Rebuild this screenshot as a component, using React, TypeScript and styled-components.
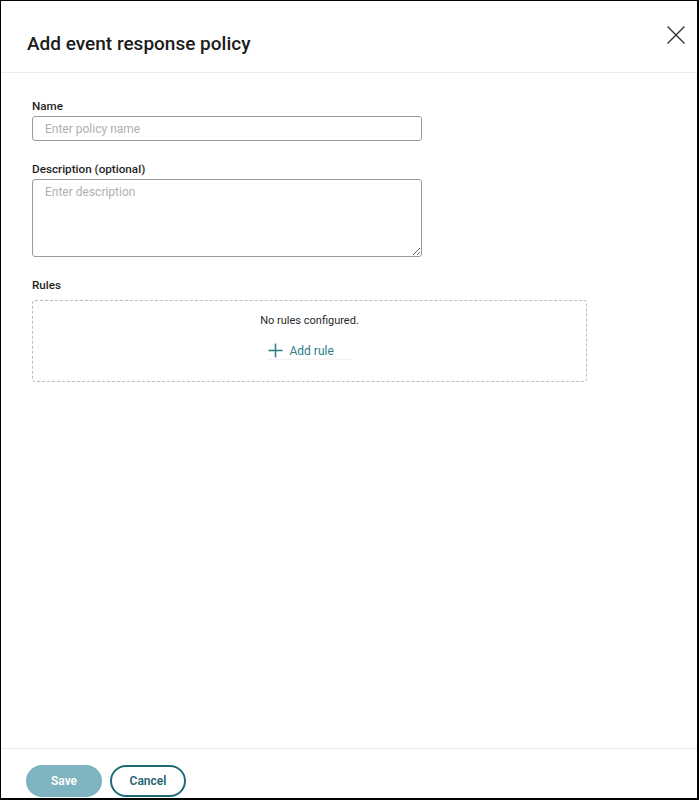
import React from "react";
import styled, { createGlobalStyle } from "styled-components";

const Global = createGlobalStyle`
  html, body { margin: 0; padding: 0; background: #fff; }
  body { font-family: Roboto, "Noto Sans", "Liberation Sans", sans-serif; }
  * { box-sizing: border-box; }
`;

const Frame = styled.div`
  width: 699px;
  height: 800px;
  border-style: solid;
  border-color: #000;
  border-width: 1px 2px 2px 1px;
  display: flex;
  flex-direction: column;
  overflow: hidden;
  background: #fff;
`;

const Header = styled.div`
  height: 72px;
  flex: 0 0 72px;
  border-bottom: 1px solid #ececec;
  display: flex;
  align-items: center;
  justify-content: space-between;
  padding: 0 10px 0 26px;
`;

const Title = styled.h1`
  margin: 13px 0 0 0;
  font-size: 19px;
  font-weight: 500;
  color: #1b1b1b;
`;

const CloseButton = styled.button`
  border: none;
  background: transparent;
  padding: 0;
  width: 22px;
  height: 22px;
  display: flex;
  align-items: center;
  justify-content: center;
  cursor: pointer;
  margin-bottom: 3px;
`;

const Body = styled.div`
  flex: 1;
  padding: 25px 0 0 31px;
  display: flex;
  flex-direction: column;
`;

const Field = styled.div<{ $gap?: number }>`
  display: flex;
  flex-direction: column;
  gap: ${(p) => p.$gap ?? 2}px;
  margin-bottom: 20px;
`;

const Label = styled.label`
  font-size: 11.7px;
  line-height: 16px;
  font-weight: 500;
  color: #1f1f1f;
`;

const Input = styled.input`
  width: 390px;
  height: 25px;
  border: 1px solid #9a9a9a;
  border-radius: 3px;
  padding: 0 12px;
  font-family: inherit;
  font-size: 12px;
  color: #222;
  outline: none;
  &::placeholder { color: #b0b0b0; }
`;

const TextArea = styled.textarea`
  width: 390px;
  height: 78px;
  border: 1px solid #9a9a9a;
  border-radius: 3px;
  padding: 5px 12px;
  font-family: inherit;
  font-size: 12px;
  color: #222;
  outline: none;
  resize: vertical;
  display: block;
  &::placeholder { color: #b0b0b0; }
`;

const RulesBox = styled.div`
  width: 555px;
  height: 82px;
  border: 1px dashed #bdbdbd;
  border-radius: 3px;
  display: flex;
  flex-direction: column;
  align-items: center;
  padding-top: 12px;
  gap: 14px;
`;

const EmptyText = styled.div`
  font-size: 11px;
  line-height: 16px;
  color: #2a2a2a;
`;

const AddRuleButton = styled.button`
  border: none;
  border-bottom: 1px solid #f2f2f2;
  background: transparent;
  display: flex;
  align-items: center;
  gap: 7px;
  width: 84px;
  padding: 0 0 1px 0;
  font-family: inherit;
  font-size: 12px;
  color: #2c7d89;
  cursor: pointer;
`;

const Footer = styled.div`
  flex: 0 0 auto;
  height: 50px;
  border-top: 1px solid #ececec;
  display: flex;
  align-items: flex-start;
  gap: 8px;
  padding: 16px 0 0 25px;
`;

const PillButton = styled.button<{ $primary?: boolean }>`
  width: 76px;
  height: 32px;
  border-radius: 16px;
  font-family: inherit;
  font-size: 12px;
  font-weight: 600;
  cursor: pointer;
  border: 2px solid ${(p) => (p.$primary ? "#7db4c0" : "#1f6b79")};
  background: ${(p) => (p.$primary ? "#7db4c0" : "#fff")};
  color: ${(p) => (p.$primary ? "#fff" : "#1f6472")};
`;

export default function App() {
  return (
    <>
      <Global />
      <Frame>
        <Header>
          <Title>Add event response policy</Title>
          <CloseButton aria-label="Close">
            <svg width="20" height="20" viewBox="0 0 20 20">
              <path d="M1.5 1.5 L18.5 18.5 M18.5 1.5 L1.5 18.5" stroke="#333" strokeWidth="1.4" fill="none" />
            </svg>
          </CloseButton>
        </Header>
        <Body>
          <Field>
            <Label>Name</Label>
            <Input placeholder="Enter policy name" />
          </Field>
          <Field>
            <Label>Description (optional)</Label>
            <TextArea placeholder="Enter description" />
          </Field>
          <Field $gap={7}>
            <Label>Rules</Label>
            <RulesBox>
              <EmptyText>No rules configured.</EmptyText>
              <AddRuleButton>
                <svg width="15" height="15" viewBox="0 0 15 15">
                  <path d="M7.5 0.5 V14.5 M0.5 7.5 H14.5" stroke="#2c7d89" strokeWidth="1.5" fill="none" />
                </svg>
                Add rule
              </AddRuleButton>
            </RulesBox>
          </Field>
        </Body>
        <Footer>
          <PillButton $primary disabled>Save</PillButton>
          <PillButton>Cancel</PillButton>
        </Footer>
      </Frame>
    </>
  );
}
